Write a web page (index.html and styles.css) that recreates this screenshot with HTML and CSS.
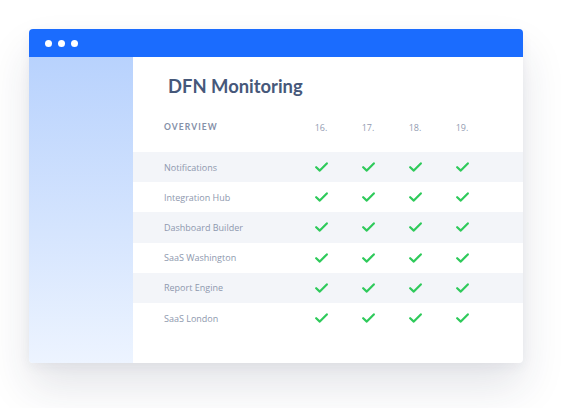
FILE: index.html
```html
<!DOCTYPE html>
<html>
<head>
<meta charset="utf-8">
<link rel="stylesheet" href="styles.css">
</head>
<body>
<div class="window">
  <div class="titlebar">
    <span class="dot"></span><span class="dot"></span><span class="dot"></span>
  </div>
  <div class="main">
    <div class="sidebar"></div>
    <div class="content">
      <h1 class="title">DFN Monitoring</h1>
      <div class="row head">
        <div class="label overview">OVERVIEW</div>
        <div class="cell">16.</div>
        <div class="cell">17.</div>
        <div class="cell">18.</div>
        <div class="cell">19.</div>
      </div>
      <div class="row band">
        <div class="label">Notifications</div>
        <div class="cell"><svg class="check" viewBox="0 0 13 10"><path d="M1.2 5.2 L4.8 8.6 L11.8 1.4"/></svg></div>
        <div class="cell"><svg class="check" viewBox="0 0 13 10"><path d="M1.2 5.2 L4.8 8.6 L11.8 1.4"/></svg></div>
        <div class="cell"><svg class="check" viewBox="0 0 13 10"><path d="M1.2 5.2 L4.8 8.6 L11.8 1.4"/></svg></div>
        <div class="cell"><svg class="check" viewBox="0 0 13 10"><path d="M1.2 5.2 L4.8 8.6 L11.8 1.4"/></svg></div>
      </div>
      <div class="row">
        <div class="label">Integration Hub</div>
        <div class="cell"><svg class="check" viewBox="0 0 13 10"><path d="M1.2 5.2 L4.8 8.6 L11.8 1.4"/></svg></div>
        <div class="cell"><svg class="check" viewBox="0 0 13 10"><path d="M1.2 5.2 L4.8 8.6 L11.8 1.4"/></svg></div>
        <div class="cell"><svg class="check" viewBox="0 0 13 10"><path d="M1.2 5.2 L4.8 8.6 L11.8 1.4"/></svg></div>
        <div class="cell"><svg class="check" viewBox="0 0 13 10"><path d="M1.2 5.2 L4.8 8.6 L11.8 1.4"/></svg></div>
      </div>
      <div class="row band">
        <div class="label">Dashboard Builder</div>
        <div class="cell"><svg class="check" viewBox="0 0 13 10"><path d="M1.2 5.2 L4.8 8.6 L11.8 1.4"/></svg></div>
        <div class="cell"><svg class="check" viewBox="0 0 13 10"><path d="M1.2 5.2 L4.8 8.6 L11.8 1.4"/></svg></div>
        <div class="cell"><svg class="check" viewBox="0 0 13 10"><path d="M1.2 5.2 L4.8 8.6 L11.8 1.4"/></svg></div>
        <div class="cell"><svg class="check" viewBox="0 0 13 10"><path d="M1.2 5.2 L4.8 8.6 L11.8 1.4"/></svg></div>
      </div>
      <div class="row">
        <div class="label">SaaS Washington</div>
        <div class="cell"><svg class="check" viewBox="0 0 13 10"><path d="M1.2 5.2 L4.8 8.6 L11.8 1.4"/></svg></div>
        <div class="cell"><svg class="check" viewBox="0 0 13 10"><path d="M1.2 5.2 L4.8 8.6 L11.8 1.4"/></svg></div>
        <div class="cell"><svg class="check" viewBox="0 0 13 10"><path d="M1.2 5.2 L4.8 8.6 L11.8 1.4"/></svg></div>
        <div class="cell"><svg class="check" viewBox="0 0 13 10"><path d="M1.2 5.2 L4.8 8.6 L11.8 1.4"/></svg></div>
      </div>
      <div class="row band">
        <div class="label">Report Engine</div>
        <div class="cell"><svg class="check" viewBox="0 0 13 10"><path d="M1.2 5.2 L4.8 8.6 L11.8 1.4"/></svg></div>
        <div class="cell"><svg class="check" viewBox="0 0 13 10"><path d="M1.2 5.2 L4.8 8.6 L11.8 1.4"/></svg></div>
        <div class="cell"><svg class="check" viewBox="0 0 13 10"><path d="M1.2 5.2 L4.8 8.6 L11.8 1.4"/></svg></div>
        <div class="cell"><svg class="check" viewBox="0 0 13 10"><path d="M1.2 5.2 L4.8 8.6 L11.8 1.4"/></svg></div>
      </div>
      <div class="row">
        <div class="label">SaaS London</div>
        <div class="cell"><svg class="check" viewBox="0 0 13 10"><path d="M1.2 5.2 L4.8 8.6 L11.8 1.4"/></svg></div>
        <div class="cell"><svg class="check" viewBox="0 0 13 10"><path d="M1.2 5.2 L4.8 8.6 L11.8 1.4"/></svg></div>
        <div class="cell"><svg class="check" viewBox="0 0 13 10"><path d="M1.2 5.2 L4.8 8.6 L11.8 1.4"/></svg></div>
        <div class="cell"><svg class="check" viewBox="0 0 13 10"><path d="M1.2 5.2 L4.8 8.6 L11.8 1.4"/></svg></div>
      </div>
    </div>
  </div>
</div>
</body>
</html>
```

FILE: styles.css
```css
html, body {
  margin: 0;
  padding: 0;
  background: #ffffff;
}
body {
  width: 570px;
  height: 408px;
  overflow: hidden;
  font-family: Lato, "Open Sans", sans-serif;
}
.window {
  margin: 29px 0 0 29px;
  width: 494px;
  height: 334px;
  border-radius: 4px;
  background: #ffffff;
  box-shadow: 0 24px 44px rgba(30, 40, 70, 0.12), 0 4px 12px rgba(30, 40, 70, 0.05);
  display: flex;
  flex-direction: column;
  overflow: hidden;
}
.titlebar {
  height: 28px;
  flex: none;
  background: #1b6cfe;
  display: flex;
  align-items: center;
  gap: 6px;
  padding-left: 16px;
}
.dot {
  width: 7px;
  height: 7px;
  border-radius: 50%;
  background: #ffffff;
}
.main {
  flex: 1;
  display: flex;
}
.sidebar {
  width: 104px;
  flex: none;
  background: linear-gradient(180deg, #b8d2fd 0%, #d4e4fe 55%, #edf4ff 100%);
}
.content {
  flex: 1;
  display: flex;
  flex-direction: column;
}
.title {
  margin: 17px 0 0 35px;
  font-size: 18.4px;
  line-height: 24px;
  font-weight: 700;
  color: #46587a;
}
.row {
  height: 30.2px;
  display: flex;
  align-items: center;
  padding-left: 31px;
}
.row.head {
  margin-top: 14px;
  margin-bottom: 10px;
  height: 30px;
}
.band {
  background: #f3f5f9;
}
.label {
  width: 133.5px;
  font-family: "Open Sans", Lato, sans-serif;
  font-size: 9px;
  color: #8e98ae;
}
.overview {
  font-family: Lato, "Open Sans", sans-serif;
  font-size: 8.5px;
  font-weight: 700;
  letter-spacing: 1.1px;
  color: #8590a8;
}
.cell {
  width: 47px;
  display: flex;
  justify-content: center;
  font-family: "Open Sans", Lato, sans-serif;
  font-size: 9px;
  color: #939cb2;
}
.check {
  width: 13px;
  height: 10px;
}
.check path {
  fill: none;
  stroke: #2fca5b;
  stroke-width: 2.2;
  stroke-linecap: round;
  stroke-linejoin: round;
}
```
